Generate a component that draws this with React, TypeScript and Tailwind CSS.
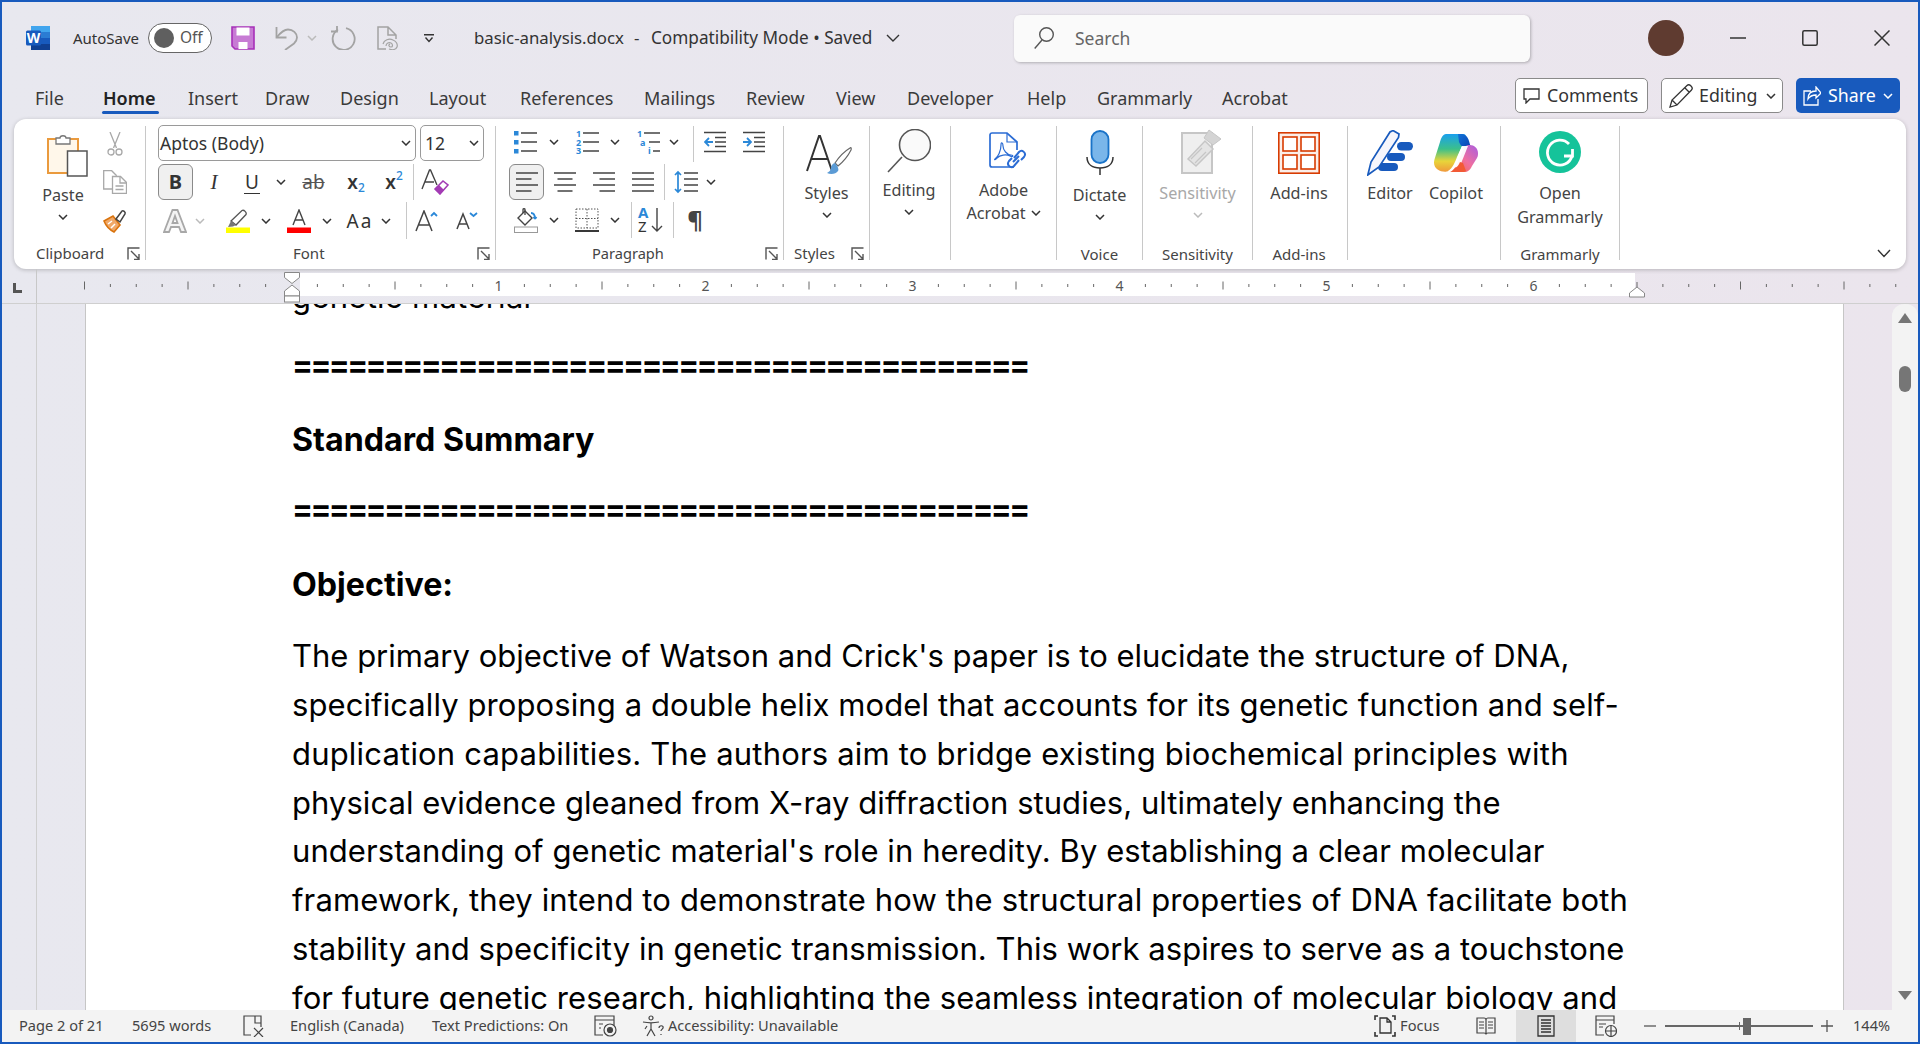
import React from "react";

const Chev = ({ c = "#333" }: { c?: string }) => (
  <svg width="10" height="6" viewBox="0 0 10 6"><path d="M1 1l4 4 4-4" fill="none" stroke={c} strokeWidth="1.5" /></svg>
);
const C = ({ w, children }: { w: string; children?: React.ReactNode }) => (
  <div className={`flex items-center justify-center shrink-0 ${w}`}>{children}</div>
);
const Launcher = () => (
  <svg width="13" height="13" viewBox="0 0 13 13" className="shrink-0"><path d="M1 12.5V1h11.5M4 4l8 8M12 7v5.5H7" fill="none" stroke="#555" strokeWidth="1.4" /></svg>
);
const Group = ({ w, label, labelCls, launcher, children }: { w: string; label?: string; labelCls?: string; launcher?: boolean; children?: React.ReactNode }) => (
  <div className={`flex flex-col shrink-0 h-[134px] border-r border-[#c8c8c8] ${w}`}>
    <div className="h-[122px]">{children}</div>
    <div className="h-[12px] flex items-center text-[15px] text-[#444]">
      {label && <span className={labelCls}>{label}</span>}
      {launcher && <span className="ml-auto mr-[5px] flex -mt-[2px]"><Launcher /></span>}
    </div>
  </div>
);

const WordLogo = () => (
  <svg width="24" height="24" viewBox="0 0 24 24">
    <rect x="5" y="0" width="19" height="6" fill="#41a5ee" />
    <rect x="5" y="6" width="19" height="6" fill="#2b7cd3" />
    <rect x="5" y="12" width="19" height="6" fill="#185abd" />
    <rect x="5" y="18" width="19" height="6" fill="#103f91" />
    <rect x="0" y="4.500" width="15" height="15" rx="1.5" fill="#185abd" />
    <text x="7.5" y="16.800" textAnchor="middle" fontSize="14" fontWeight="700" fill="#fff" fontFamily="Noto Sans">W</text>
  </svg>
);
const SaveIc = () => (
  <svg width="24" height="24" viewBox="0 0 24 24">
    <path d="M1 1h22v22H4l-3-3z" fill="#c77bd4" stroke="#a730b8" strokeWidth="1.6" />
    <rect x="5.5" y="1.5" width="13" height="8" fill="#fff" />
    <rect x="7.5" y="16" width="9" height="7" fill="#fff" />
  </svg>
);
const Undo = () => (
  <svg width="24" height="24" viewBox="0 0 24 24" fill="none" stroke="#a3a3a3" strokeWidth="1.8">
    <path d="M1.5 1v10.5h10" />
    <path d="M1.5 11.5C6 6 9 3.5 13 3.5c5 0 9 3.500 9 8 0 2.500-1 4-3 6L10 24" />
  </svg>
);
const Redo = () => (
  <svg width="25" height="24" viewBox="0 0 25 24" fill="none" stroke="#a3a3a3" strokeWidth="1.8">
    <path d="M7 3.500A11 11 0 1 0 15 2.200" />
    <path d="M6 0v5.500h-6" />
  </svg>
);
const FileIc = () => (
  <svg width="21" height="24" viewBox="0 0 21 24" fill="none" stroke="#a3a3a3" strokeWidth="1.5">
    <path d="M9 23H1V1h10l8 8v4M11 1v8h8" />
    <path d="M9 20c0-3 3-4 5-3s2 4 0 4-3-2-1-3M6 18c1-4 6-6 10-4 3 1 5 4 4 7s-5 3-8 2" strokeWidth="1.2" />
  </svg>
);
const Customize = () => (
  <svg width="10" height="9" viewBox="0 0 10 9" fill="none" stroke="#333" strokeWidth="1.4"><path d="M0 .8h10M1.500 3.500L5 7.500l3.500-4" /></svg>
);
const SearchIc = () => (
  <svg width="20" height="22" viewBox="0 0 20 22" fill="none" stroke="#555" strokeWidth="1.4"><circle cx="12.500" cy="7.500" r="6.800" /><path d="M8 13L.7 21.500" /></svg>
);
const Paste = () => (
  <svg width="41" height="45" viewBox="0 0 41 45">
    <rect x="1" y="7" width="30" height="34" fill="#fff7ea" stroke="#ea9a3d" strokeWidth="2" />
    <path d="M9 12V6h4c0-3 6-3 6 0h4v6z" fill="#fff" stroke="#777" strokeWidth="1.300" />
    <rect x="20.500" y="19" width="19.500" height="25" fill="#fff" stroke="#555" strokeWidth="1.500" />
  </svg>
);
const Scissors = () => (
  <svg width="16" height="24" viewBox="0 0 16 24" fill="none" stroke="#a8a8a8" strokeWidth="1.300"><path d="M3 0l6.500 16M13 0L6.500 16" /><circle cx="4" cy="20" r="3" /><circle cx="12" cy="20" r="3" /></svg>
);
const Copy = () => (
  <svg width="24" height="24" viewBox="0 0 24 24" fill="none" stroke="#a8a8a8" strokeWidth="1.300"><path d="M9 19H.7V.7h8l5 5" /><path d="M9.500 6.500h8l6 6v11h-14z" fill="#fff" /><path d="M17 6.500V13h6.500M12.500 16h8M12.500 19.500h8" /></svg>
);
const Painter = () => (
  <svg width="24" height="24" viewBox="0 0 24 24">
    <path d="M1 12l9-5 7 9-6 7c-4-2-8-6-10-11z" fill="#f0a868" stroke="#d9730d" strokeWidth="1.600" />
    <path d="M5 15l4-3M8 19l4-4" stroke="#fff" strokeWidth="1.500" />
    <path d="M13 10l6-8c1-1 4 1 3 3l-5 8z" fill="#fff" stroke="#444" strokeWidth="1.500" />
  </svg>
);
const AEraser = () => (
  <svg width="28" height="26" viewBox="0 0 28 26">
    <path d="M1 20L8.500 1h1L16 16M4 13h9" fill="none" stroke="#444" strokeWidth="1.400" />
    <path d="M14 20l8-8 5 4-8 9z" fill="#fff" stroke="#a33bb4" strokeWidth="1.600" />
    <path d="M14 20l4-4 5 5-4 4z" fill="#a33bb4" />
  </svg>
);
const AOutline = () => (
  <svg width="24" height="24" viewBox="0 0 24 24"><path d="M1 23L9.500 1h5L23 23h-5l-2-5H8l-2 5zM9.500 14h5L12 7z" fill="#f4f4f4" stroke="#a8a8a8" strokeWidth="1.800" /></svg>
);
const Highlight = () => (
  <svg width="24" height="24" viewBox="0 0 24 24">
    <path d="M5 12L16 1.500c2-1 5 2 4 4L10 16z" fill="#fff" stroke="#555" strokeWidth="1.300" />
    <path d="M5 12l5 4-3 1.500L2 18z" fill="#777" />
    <rect x="0" y="18.500" width="24" height="6" fill="#ffff00" />
  </svg>
);
const FontColor = () => (
  <svg width="24" height="24" viewBox="0 0 24 24">
    <path d="M6 16L12 1l6 15M8 11h8" fill="none" stroke="#444" strokeWidth="1.400" />
    <rect x="0" y="18.500" width="24" height="6" fill="#ff0000" />
  </svg>
);
const Grow = () => (
  <svg width="24" height="22" viewBox="0 0 24 22" fill="none"><path d="M1 21L9 1l8 20M4 15h10" stroke="#444" strokeWidth="1.500" /><path d="M16 6l3-3 3 3" stroke="#2b88d8" strokeWidth="1.800" /></svg>
);
const Shrink = () => (
  <svg width="22" height="18" viewBox="0 0 22 18" fill="none"><path d="M1 17L7 2l6 15M3.500 12h7" stroke="#444" strokeWidth="1.500" /><path d="M14 1l3.500 3L21 1" stroke="#2b88d8" strokeWidth="1.800" /></svg>
);

const L = ({ d }: { d: string }) => <path d={d} fill="none" stroke="#444" strokeWidth="1.400" />;
const Bullets = () => (
  <svg width="24" height="24" viewBox="0 0 24 24">
    <rect x="1" y="1" width="4.500" height="4.500" fill="#2b88d8" /><rect x="1" y="10" width="4.500" height="4.500" fill="#2b88d8" /><rect x="1" y="19" width="4.500" height="4.500" fill="#2b88d8" />
    <L d="M8 3h16M8 12h16M8 21h16" />
  </svg>
);
const Numbered = () => (
  <svg width="24" height="26" viewBox="0 0 24 26" fontFamily="Noto Sans" fontSize="9" fontWeight="700" fill="#2b88d8">
    <text x="1" y="8">1</text><text x="1" y="17">2</text><text x="1" y="25">3</text>
    <L d="M8 4h16M8 13h16M8 22h16" />
  </svg>
);
const Multi = () => (
  <svg width="24" height="26" viewBox="0 0 24 26" fontFamily="Noto Sans" fontSize="9" fontWeight="700" fill="#2b88d8">
    <text x="1" y="8">1</text><text x="4" y="17">a</text><text x="12" y="25">i</text>
    <L d="M8 4h16M13 13h11M17 22h7" />
  </svg>
);
const IndentL = () => (
  <svg width="22" height="22" viewBox="0 0 22 22"><L d="M0 1.500h22M0 20.500h22M11 6.500h11M11 11h11M11 15.500h11" /><path d="M9 11H1M5 7l-4 4 4 4" fill="none" stroke="#2b88d8" strokeWidth="1.800" /></svg>
);
const IndentR = () => (
  <svg width="22" height="22" viewBox="0 0 22 22"><L d="M0 1.500h22M0 20.500h22M11 6.500h11M11 11h11M11 15.500h11" /><path d="M0 11h8M4 7l4 4-4 4" fill="none" stroke="#2b88d8" strokeWidth="1.800" /></svg>
);
const Align = ({ d }: { d: string }) => <svg width="22" height="20" viewBox="0 0 22 20"><L d={d} /></svg>;
const LineSp = () => (
  <svg width="24" height="24" viewBox="0 0 24 24">
    <path d="M4 2v20M1 5l3-3 3 3M1 19l3 3 3-3" fill="none" stroke="#2b88d8" strokeWidth="1.700" />
    <L d="M10 3h14M10 9h14M10 15h14M10 21h14" />
  </svg>
);
const Shading = () => (
  <svg width="24" height="25" viewBox="0 0 24 25">
    <path d="M4 10L11 3l7 7-7 7z" fill="#fff" stroke="#444" strokeWidth="1.400" />
    <path d="M9 5V1.500c0-1 2-1 2 0V7" fill="none" stroke="#444" strokeWidth="1.300" />
    <path d="M17 5c3 0 4 3 4 6M21 11l-1.500-2M21 11l1.500-2" fill="none" stroke="#2b88d8" strokeWidth="1.800" />
    <rect x=".5" y="19" width="23" height="5.500" fill="#fff" stroke="#999" />
  </svg>
);
const Borders = () => (
  <svg width="24" height="24" viewBox="0 0 24 24">
    <path d="M1 1h22v19H1zM12 1v19M1 10.500h22" fill="none" stroke="#555" strokeWidth="1" strokeDasharray="1.500 1.500" />
    <path d="M0 23h24" stroke="#222" strokeWidth="1.800" />
  </svg>
);
const Sort = () => (
  <svg width="28" height="26" viewBox="0 0 28 26" fontFamily="Noto Sans" fontSize="15">
    <text x="1" y="11" fill="#2b88d8" fontWeight="700">A</text>
    <text x="1" y="25" fill="#333">Z</text>
    <path d="M20 1v23M15 19l5 5 5-5" fill="none" stroke="#444" strokeWidth="1.400" />
  </svg>
);
const StylesIc = () => (
  <svg width="46" height="42" viewBox="0 0 46 42">
    <path d="M1 36L13 1h1l12 35M5.500 24h17" fill="none" stroke="#333" strokeWidth="2" />
    <path d="M44 13c1-1 1.500 0 1 2-3 6-8 12-13 16l-3-3c4-6 10-12 15-15z" fill="#fff" stroke="#666" strokeWidth="1.200" />
    <path d="M29 28c-2 0-4 3-4 5 0 2-2 4-4 5 4 2 9 1 11-2 1-1 0-5-3-8z" fill="#5b9bd5" />
  </svg>
);
const Magnifier = () => (
  <svg width="44" height="44" viewBox="0 0 44 44"><circle cx="28" cy="16" r="15.500" fill="#fafafa" stroke="#555" strokeWidth="1.600" /><path d="M15 28L1 43" stroke="#555" strokeWidth="1.600" /></svg>
);
const Acrobat = () => (
  <svg width="38" height="42" viewBox="0 0 38 42" fill="none">
    <path d="M25 35H3a2 2 0 0 1-2-2V3a2 2 0 0 1 2-2h15l10 9v8" stroke="#2b6cd4" strokeWidth="1.700" />
    <path d="M18 1v9h10" stroke="#2b6cd4" strokeWidth="1.200" />
    <path d="M6 27c3-2 6-8 6-14 0-4 2-2 2 1 0 4 4 9 8 9 3 0 2 3-1 1-4-2-10-1-13 2-2 2-3 2-2 1z" stroke="#2b6cd4" strokeWidth="1.200" />
    <path d="M25 26l5-6c3-3 8 1 5 5l-3 3M30 28l-5 6c-3 3-8-1-5-5l3-3M24 30l6-6" stroke="#2b6cd4" strokeWidth="2" />
  </svg>
);
const Mic = () => (
  <svg width="28" height="45" viewBox="0 0 28 45" fill="none">
    <rect x="5.500" y="1" width="17" height="32" rx="8.500" fill="#7ab6ea" stroke="#1a73c8" strokeWidth="1.800" />
    <path d="M1 27c0 8 6 11 13 11s13-3 13-11M14 38v7" stroke="#333" strokeWidth="1.500" />
  </svg>
);
const SensIc = () => (
  <svg width="41" height="45" viewBox="0 0 41 45">
    <path d="M1 4h30v40H1z" fill="#efefef" stroke="#c6c6c6" strokeWidth="2" />
    <path d="M7 30L24 12l8 8-17 17z" fill="#e4e4e4" stroke="#c6c6c6" strokeWidth="1.500" />
    <path d="M10 30l11-11M14 34l11-11" stroke="#c6c6c6" strokeWidth="1.200" />
    <path d="M23 9l5-8 12 9-8 6z" fill="#d4d4d4" stroke="#c6c6c6" />
  </svg>
);
const AddIns = () => (
  <svg width="42" height="42" viewBox="0 0 42 42" fill="none" stroke="#d83b01" strokeWidth="1.600">
    <rect x=".8" y=".8" width="40.400" height="40.400" fill="#fbeee8" />
    <rect x="5" y="5" width="14" height="14" fill="#fff" /><rect x="23" y="5" width="14" height="14" fill="#fff" /><rect x="5" y="23" width="14" height="14" fill="#fff" /><rect x="23" y="23" width="14" height="14" fill="#fff" />
  </svg>
);
const EditorIc = () => (
  <svg width="46" height="46" viewBox="0 0 46 46">
    <rect x="30" y="12" width="16" height="8.500" rx="4.200" fill="#185abd" /><rect x="20" y="23" width="18" height="8" rx="4" fill="#185abd" /><rect x="11" y="33" width="20" height="8" rx="4" fill="#185abd" />
    <path d="M.8 45L4 32 23 2l3-1.500 6 3.500-.5 3.500L12 37z" fill="#f6f6fc" stroke="#185abd" strokeWidth="1.700" />
  </svg>
);
const Copilot = () => (
  <svg width="44" height="40" viewBox="0 0 44 40">
    <defs>
      <linearGradient id="cpa" x1="0" y1="0" x2="0" y2="1"><stop offset="0" stopColor="#19a0ee" /><stop offset=".4" stopColor="#3cc08a" /><stop offset=".72" stopColor="#e8d53a" /><stop offset="1" stopColor="#f09a3c" /></linearGradient>
      <linearGradient id="cpb" x1="1" y1="0" x2="0" y2="1"><stop offset="0" stopColor="#a95de0" /><stop offset=".5" stopColor="#ef6fa0" /><stop offset="1" stopColor="#f6693a" /></linearGradient>
      <linearGradient id="cpc" x1="0" y1="0" x2="1" y2="1"><stop offset="0" stopColor="#1173d8" /><stop offset="1" stopColor="#0b3fb0" /></linearGradient>
    </defs>
    <path d="M12 1h17c2 0 3 1 3 3L23 24c-2 5-4 11-9 14-1 .7-2 .7-3 .7-5 0-11-3-11-9 0-2 .5-3 1-5L6 9c1-4 3-8 6-8z" fill="url(#cpa)" />
    <path d="M24 1h4c3 0 6 3 7 7l2 7-8-1c-2-1-3-3-4-5z" fill="url(#cpc)" />
    <path d="M36 12c4 0 8 3 8 8 0 2 0 3-1 5l-5 8c-2 4-4 6-8 6H16c3-1 5-4 7-8l6-14c1-3 3-5 7-5z" fill="url(#cpb)" />
    <path d="M20 33l8-20h6l-8 20c-1 2-5 2-6 0z" fill="#fff" opacity=".95" />
    <path d="M20 36c3-2 5-4 6-7l3 1 3 8-2 1H17z" fill="#f25a35" />
  </svg>
);
const Grammarly = () => (
  <svg width="42" height="42" viewBox="0 0 42 42" fill="none">
    <circle cx="21" cy="21" r="21" fill="#15c39a" />
    <path d="M30 13A12.500 12.500 0 1 0 33 25" stroke="#fff" strokeWidth="2.800" />
    <path d="M25 25h8.500v-7" stroke="#fff" strokeWidth="2.800" />
  </svg>
);

const tabs: [string, string][] = [
  ["File", "w-[68px]"],
  ["Insert", "w-[77px]"],
  ["Draw", "w-[75px]"],
  ["Design", "w-[89px]"],
  ["Layout", "w-[91px]"],
  ["References", "w-[124px]"],
  ["Mailings", "w-[102px]"],
  ["Review", "w-[90px]"],
  ["View", "w-[71px]"],
  ["Developer", "w-[120px]"],
  ["Help", "w-[70px]"],
  ["Grammarly", "w-[125px]"],
  ["Acrobat", "w-[70px]"],
];
const Tab = ({ t }: { t: [string, string] }) => <span className={`shrink-0 ${t[1]}`}>{t[0]}</span>;

const lines: [string, string][] = [
  ["The primary objective of Watson and Crick's paper is to elucidate the structure of DNA,", "tracking-[0px]"],
  ["specifically proposing a double helix model that accounts for its genetic function and self-", "tracking-[0.09px]"],
  ["duplication capabilities. The authors aim to bridge existing biochemical principles with", "tracking-[0.19px]"],
  ["physical evidence gleaned from X-ray diffraction studies, ultimately enhancing the", "tracking-[0.045px]"],
  ["understanding of genetic material's role in heredity. By establishing a clear molecular", "tracking-[0.08px]"],
  ["framework, they intend to demonstrate how the structural properties of DNA facilitate both", "tracking-[0.135px]"],
  ["stability and specificity in genetic transmission. This work aspires to serve as a touchstone", "tracking-[0.05px]"],
  ["for future genetic research, highlighting the seamless integration of molecular biology and", "tracking-[0.08px]"],
];
const eq = "========================================";
const ticks = Array.from({ length: 72 }, (_, k) => k - 8);

const Ruler = () => (
  <svg width="1881" height="34" viewBox="37 269 1881 34" className="shrink-0">
    <rect x="300" y="273" width="1335" height="23" fill="#fff" />
    {ticks.map((i) => {
      const x = 291.5 + (207 * i) / 8;
      if (i % 8 === 0 && i > 0 && i <= 48)
        return <text key={i} x={x} y="291" textAnchor="middle" fontSize="14" fill="#555" fontFamily="Noto Sans">{i / 8}</text>;
      if (i === 0 || i === 52) return null;
      return i % 4 === 0 ? <path key={i} d={`M${x} 281.5v8`} stroke="#666" strokeWidth="1" /> : <path key={i} d={`M${x} 284v3`} stroke="#666" strokeWidth="1" />;
    })}
    <path d="M284.500 272.500h15v5l-7.500 6-7.500-6z" fill="#fff" stroke="#888" />
    <path d="M284.500 296v-5l7.500-6 7.500 6v5z" fill="#fff" stroke="#888" />
    <rect x="284.500" y="296" width="15" height="6" fill="#fff" stroke="#888" />
    <path d="M1629.500 297v-4l7.500-6 7.500 6v4z" fill="#fff" stroke="#888" />
    <path d="M1637 282v5" stroke="#666" />
  </svg>
);

export default function App() {
  return (
    <div className="w-[1920px] h-[1044px] overflow-hidden border-2 border-[#185abd] flex flex-col bg-gradient-to-r from-[#e8e8ef] to-[#ebe5ed] font-['Noto_Sans',sans-serif] text-[#333]">
      {/* Title bar */}
      <div className="h-[72px] shrink-0 flex items-center">
        <div className="ml-[24px] flex"><WordLogo /></div>
        <span className="ml-[23px] w-[66px] text-[15px] whitespace-nowrap">AutoSave</span>
        <div className="ml-[9px] w-[64px] h-[30px] rounded-full border-[1.5px] border-[#666] bg-white flex items-center pl-[5px]">
          <div className="w-[20px] h-[20px] rounded-full bg-[#5f5f5f]" />
          <span className="ml-[6px] text-[15.500px] text-[#555]">Off</span>
        </div>
        <div className="ml-[19px] flex"><SaveIc /></div>
        <div className="ml-[20px] flex"><Undo /></div>
        <div className="ml-[8px] flex"><Chev c="#bbb" /></div>
        <div className="ml-[14px] flex"><Redo /></div>
        <div className="ml-[21px] flex"><FileIc /></div>
        <div className="ml-[26px] flex"><Customize /></div>
        <span className="ml-[40px] w-[160px] text-[16.8px] whitespace-nowrap">basic-analysis.docx</span>
        <span className="w-[17px] text-[16.8px]">-</span>
        <span className="text-[17.2px] w-[226px] whitespace-nowrap">Compatibility Mode&nbsp;•&nbsp;Saved</span>
        <svg className="ml-[9px]" width="14" height="8" viewBox="0 0 14 8"><path d="M1 1l6 6 6-6" fill="none" stroke="#333" strokeWidth="1.400" /></svg>
        <div className="ml-[114px] w-[516px] h-[47px] rounded-[6px] bg-[#fafafa] shadow-[1px_1px_3px_rgba(0,0,0,0.25)] flex items-center pl-[20px]">
          <SearchIc />
          <span className="ml-[21px] text-[17.5px] text-[#666]">Search</span>
        </div>
        <div className="ml-[118px] w-[36px] h-[36px] rounded-full bg-[#5f3b30]" />
        <svg className="ml-[46px]" width="16" height="2" viewBox="0 0 16 2"><path d="M0 1h16" stroke="#333" strokeWidth="1.500" /></svg>
        <svg className="ml-[56px]" width="16" height="16" viewBox="0 0 16 16"><rect x=".8" y=".8" width="14.400" height="14.400" rx="1.500" fill="none" stroke="#333" strokeWidth="1.500" /></svg>
        <svg className="ml-[56px]" width="16" height="16" viewBox="0 0 16 16"><path d="M.5.5l15 15M15.500.5l-15 15" stroke="#333" strokeWidth="1.500" /></svg>
      </div>
      {/* Tabs */}
      <div className="h-[45px] shrink-0 flex items-start">
        <div className="ml-[33px] mt-[12px] flex text-[18px] leading-[24px] text-[#3a3a3a] whitespace-nowrap">
          <Tab t={tabs[0]} />
          <div className="w-[85px] shrink-0 relative font-semibold text-[#222]">
            Home
            <div className="absolute left-[-1px] w-[57px] top-[25px] h-[3px] rounded-[2px] bg-[#185abd]" />
          </div>
          {tabs.slice(1).map((t) => <Tab key={t[0]} t={t} />)}
        </div>
        <div className="ml-auto mt-[4px] mr-[18px] flex gap-[13px] text-[17.800px]">
          <div className="w-[133px] h-[35px] rounded-[5px] border border-[#8a8a8a] bg-white flex items-center pl-[7px]">
            <svg width="17" height="16" viewBox="0 0 17 16" fill="none"><path d="M1 1h15v10H7l-4 4v-4H1z" stroke="#333" strokeWidth="1.300" /></svg>
            <span className="ml-[7px]">Comments</span>
          </div>
          <div className="w-[122px] h-[35px] rounded-[5px] border border-[#8a8a8a] bg-white flex items-center pl-[7px]">
            <svg width="24" height="24" viewBox="0 0 24 24" fill="none"><path d="M1 23l2-7L18 1.500c1-1 2.500-1 4 .5s1.500 3 .5 4L8 21zM3 16l5 5M16 4l4 4" stroke="#333" strokeWidth="1.300" /></svg>
            <span className="ml-[6px]">Editing</span>
            <span className="ml-[9px] flex"><Chev /></span>
          </div>
          <div className="w-[104px] h-[35px] rounded-[5px] bg-[#185abd] text-white flex items-center pl-[7px]">
            <svg width="18" height="20" viewBox="0 0 18 20" fill="none"><path d="M8 5H1v14h14v-6M5 13c0-5 3-8 8-8V1l5 6-5 5V9c-4 0-6 1-8 4z" stroke="#fff" strokeWidth="1.300" /></svg>
            <span className="ml-[7px]">Share</span>
            <span className="ml-[7px] flex"><Chev c="#fff" /></span>
          </div>
        </div>
      </div>
      {/* Ribbon */}
      <div className="ml-[12px] w-[1892px] h-[150px] shrink-0 rounded-[12px] bg-white shadow-[0_1px_4px_rgba(0,0,0,0.22)] flex pt-[7px] text-[16.200px] leading-[20px] text-[#444]">
        <Group w="w-[132px]" label="Clipboard" labelCls="ml-[22px] -mt-[2px]" launcher>
          <div className="flex">
            <div className="ml-[9px] w-[80px] pt-[6px] flex flex-col items-center">
              <div className="ml-[8px] flex"><Paste /></div>
              <span className="mt-[8px]">Paste</span>
              <span className="mt-[9px] flex"><Chev /></span>
            </div>
            <div className="w-[24px] pt-[6px] flex flex-col items-center">
              <Scissors />
              <div className="mt-[14px]"><Copy /></div>
              <div className="mt-[15px]"><Painter /></div>
            </div>
          </div>
        </Group>
        <Group w="w-[350px]" label="Font" labelCls="ml-[147px] -mt-[2px]" launcher>
          <div className="pl-[12px] -mt-[1px] flex flex-col">
            <div className="flex gap-[4px] h-[36px] text-[#333] text-[17.5px]">
              <div className="w-[258px] rounded-[5px] border border-[#9a9a9a] flex items-center justify-between pl-[1px] pr-[4px]">
                <span>Aptos (Body)</span><Chev />
              </div>
              <div className="w-[64px] rounded-[5px] border border-[#9a9a9a] flex items-center justify-between pl-[4px] pr-[4px]">
                <span>12</span><Chev />
              </div>
            </div>
            <div className="mt-[3px] h-[36px] flex text-[#333]">
              <C w="w-[35px] rounded-[6px] border border-[#8a8a8a] bg-[#f0f0f0] font-bold text-[20px]">B</C>
              <C w="w-[42px] italic text-[21px] font-['Liberation_Serif',serif]">I</C>
              <C w="w-[34px] text-[19px]"><span className="border-b-[1.5px] border-[#333] leading-[22px] px-[1px]">U</span></C>
              <C w="w-[24px]"><Chev /></C>
              <C w="w-[41px] text-[19px] text-[#555]"><span className="line-through decoration-1">ab</span></C>
              <C w="w-[44px] text-[19px] font-semibold"><span>x</span><span className="text-[12px] text-[#2b88d8] font-medium mt-[12px]">2</span></C>
              <C w="w-[32px] text-[19px] font-semibold"><span>x</span><span className="text-[12px] text-[#2b88d8] font-medium -mt-[12px]">2</span></C>
              <div className="ml-[3px] w-px bg-[#c8c8c8]" />
              <C w="w-[42px]"><AEraser /></C>
            </div>
            <div className="mt-[2px] h-[37px] flex text-[#333]">
              <C w="w-[34px]"><AOutline /></C>
              <C w="w-[16px]"><Chev c="#bbb" /></C>
              <C w="ml-[12px] w-[36px]"><Highlight /></C>
              <C w="w-[20px]"><Chev /></C>
              <C w="w-[46px]"><FontColor /></C>
              <C w="w-[10px]"><Chev /></C>
              <C w="ml-[13px] w-[30px] text-[19px] tracking-[2px]">Aa</C>
              <C w="w-[22px]"><Chev /></C>
              <div className="ml-[9px] w-px bg-[#c8c8c8]" />
              <C w="w-[39px]"><Grow /></C>
              <C w="w-[42px]"><Shrink /></C>
            </div>
          </div>
        </Group>
        <Group w="w-[288px]" label="Paragraph" labelCls="ml-[96px] -mt-[2px] text-[14.600px]" launcher>
          <div className="flex flex-col">
            <div className="h-[32px] flex">
              <C w="ml-[17px] w-[24px]"><Bullets /></C>
              <C w="w-[34px]"><Chev /></C>
              <C w="ml-[4px] w-[24px]"><Numbered /></C>
              <C w="w-[32px]"><Chev /></C>
              <C w="ml-[5px] w-[24px]"><Multi /></C>
              <C w="w-[27px]"><Chev /></C>
              <div className="ml-[6px] w-px h-[36px] bg-[#c8c8c8]" />
              <C w="ml-[10px] w-[22px]"><IndentL /></C>
              <C w="ml-[17px] w-[22px]"><IndentR /></C>
            </div>
            <div className="mt-[6px] h-[36px] flex">
              <C w="ml-[13px] w-[35px] rounded-[6px] border border-[#8a8a8a] bg-[#f0f0f0]"><Align d="M0 1h22M0 7h15.500M0 13h22M0 19h15.500" /></C>
              <C w="w-[42px]"><Align d="M0 1h22M3.500 7h15M0 13h22M3.500 19h15" /></C>
              <C w="w-[36px]"><Align d="M0 1h22M6.500 7h15.500M0 13h22M6.500 19h15.500" /></C>
              <C w="w-[42px]"><Align d="M0 1h22M0 7h22M0 13h22M0 19h22" /></C>
              <div className="w-px bg-[#c8c8c8]" />
              <C w="ml-[9px] w-[24px]"><LineSp /></C>
              <C w="w-[26px]"><Chev /></C>
            </div>
            <div className="mt-[2px] h-[36px] flex">
              <C w="ml-[18px] w-[24px]"><Shading /></C>
              <C w="w-[32px]"><Chev /></C>
              <C w="ml-[5px] w-[24px]"><Borders /></C>
              <C w="w-[32px]"><Chev /></C>
              <div className="w-px bg-[#c8c8c8]" />
              <C w="ml-[5px] w-[28px]"><Sort /></C>
              <div className="ml-[8px] w-px bg-[#c8c8c8]" />
              <C w="w-[42px] text-[24px] font-bold text-[#444]">¶</C>
            </div>
          </div>
        </Group>
        <Group w="w-[86px]" label="Styles" labelCls="ml-[10px] -mt-[2px]" launcher>
          <div className="pt-[9px] flex flex-col items-center">
            <div className="ml-[4px] flex"><StylesIc /></div>
            <span className="mt-[6px]">Styles</span>
            <span className="mt-[9px] flex"><Chev /></span>
          </div>
        </Group>
        <Group w="w-[81px]">
          <div className="pt-[3px] pr-[2px] flex flex-col items-center">
            <Magnifier />
            <span className="mt-[7px]">Editing</span>
            <span className="mt-[9px] flex"><Chev /></span>
          </div>
        </Group>
        <Group w="w-[106px]">
          <div className="pt-[6px] flex flex-col items-center">
            <div className="ml-[8px] flex"><Acrobat /></div>
            <span className="mt-[6px]">Adobe</span>
            <span className="mt-[3px] flex items-center gap-[5px]">Acrobat<Chev /></span>
          </div>
        </Group>
        <Group w="w-[86px]" label="Voice" labelCls="w-full text-center">
          <div className="pt-[4px] flex flex-col items-center">
            <Mic />
            <span className="mt-[10px]">Dictate</span>
            <span className="mt-[9px] flex"><Chev /></span>
          </div>
        </Group>
        <Group w="w-[110px]" label="Sensitivity" labelCls="w-full text-center">
          <div className="pt-[3px] flex flex-col items-center text-[#a8a8a8]">
            <div className="ml-[7px] flex"><SensIc /></div>
            <span className="mt-[9px]">Sensitivity</span>
            <span className="mt-[9px] flex"><Chev c="#bbb" /></span>
          </div>
        </Group>
        <Group w="w-[95px]" label="Add-ins" labelCls="w-full text-center pr-[2px]">
          <div className="pt-[6px] pr-[2px] flex flex-col items-center">
            <AddIns />
            <span className="mt-[9px]">Add-ins</span>
          </div>
        </Group>
        <Group w="w-[153px]">
          <div className="flex">
            <div className="ml-[19px] w-[46px] pt-[4px] flex flex-col items-center">
              <EditorIc />
              <span className="mt-[7px]">Editor</span>
            </div>
            <div className="ml-[21px] w-[44px] pt-[7px] flex flex-col items-center">
              <Copilot />
              <span className="mt-[10px]">Copilot</span>
            </div>
          </div>
        </Group>
        <Group w="w-[119px]" label="Grammarly" labelCls="w-full text-center">
          <div className="pt-[5px] flex flex-col items-center">
            <Grammarly />
            <span className="mt-[10px]">Open</span>
            <span className="mt-[4px]">Grammarly</span>
          </div>
        </Group>
        <div className="ml-auto mr-[15px] mt-[123px]">
          <svg width="14" height="9" viewBox="0 0 14 9"><path d="M1 1l6 6.500L13 1" fill="none" stroke="#333" strokeWidth="1.400" /></svg>
        </div>
      </div>
      {/* Ruler */}
      <div className="h-[34px] shrink-0 flex">
        <div className="w-[35px] border-r border-[#c8c8c8] shrink-0 pl-[11px] pt-[14px]">
          <svg width="9" height="10" viewBox="0 0 9 10"><path d="M1.500 0v8.500H9" fill="none" stroke="#555" strokeWidth="3" /></svg>
        </div>
        <Ruler />
      </div>
      {/* Document */}
      <div className="flex-1 min-h-0 flex border-t border-[#cfcfcf]">
        <div className="w-[35px] shrink-0 border-r border-[#cfcfcf]" />
        <div className="w-[48px] shrink-0" />
        <div className="w-[1759px] shrink-0 bg-white border-x border-[#c6c6c6] overflow-hidden pl-[206px] font-['Inter',sans-serif] text-[31px] leading-[48.8px] text-black whitespace-nowrap">
          <div className="-mt-[31px] tracking-[0.3px]">genetic material</div>
          <div className="mt-[19.1px] font-bold tracking-[-2.65px]">{eq}</div>
          <div className="mt-[26.5px] font-bold text-[32.2px]">Standard Summary</div>
          <div className="mt-[20.3px] font-bold tracking-[-2.65px]">{eq}</div>
          <div className="mt-[26.5px] font-bold text-[32.2px]">Objective:</div>
          <div className="mt-[22.8px]">
            {lines.map((l) => <div key={l[0]} className={l[1]}>{l[0]}</div>)}
          </div>
        </div>
        <div className="w-[48px] shrink-0" />
        <div className="w-[26px] shrink-0 bg-[#f3f3f3] rounded-t-[12px] flex flex-col items-center">
          <svg className="mt-[9px]" width="14" height="10" viewBox="0 0 14 10"><path d="M7 0l7 10H0z" fill="#757575" /></svg>
          <div className="mt-[43px] w-[12px] h-[26px] rounded-full bg-[#767676]" />
          <svg className="mt-auto mb-[10px]" width="14" height="9" viewBox="0 0 14 9"><path d="M7 9L0 0h14z" fill="#757575" /></svg>
        </div>
      </div>
      {/* Status */}
      <div className="h-[32px] shrink-0 bg-[#f3f3f3] flex items-center text-[14.600px] text-[#444] whitespace-nowrap">
        <span className="ml-[17px] w-[113px]">Page 2 of 21</span>
        <span className="w-[111px]">5695 words</span>
        <svg width="22" height="22" viewBox="0 0 22 22" fill="none" stroke="#444" strokeWidth="1.200"><path d="M8 20H1V1h17v11M12 1v7h6M11 13l9 9M20 13l-9 9" /></svg>
        <span className="ml-[25px] w-[142px]">English (Canada)</span>
        <span className="w-[162px]">Text Predictions: On</span>
        <svg width="23" height="22" viewBox="0 0 23 22" fill="none" stroke="#444" strokeWidth="1.200"><path d="M9 20H1V1h19v9M1 5h19M5 9h4M5 13h2" /><circle cx="16" cy="15" r="6" /><circle cx="16" cy="15" r="2.500" fill="#444" /></svg>
        <svg className="ml-[25px]" width="22" height="22" viewBox="0 0 22 22" fill="none" stroke="#444" strokeWidth="1.200"><circle cx="9" cy="3" r="2" /><path d="M1 7c5 1 11 1 16 0M9 8v6M5 21l4-7 4 7M3 14l2-3M17 13c0-3 5-3 4 0-.5 1.500-2 1.500-2 3M19 19v1" /></svg>
        <span className="ml-[4px]">Accessibility: Unavailable</span>
        <svg className="ml-auto" width="22" height="22" viewBox="0 0 22 22" fill="none" stroke="#333" strokeWidth="1.300"><path d="M1 5V1h3M18 1h3v4M1 17v4h3M18 21h3v-4" strokeWidth="1.600" /><path d="M6 18V3h7l4 4v11zM13 3v4h4" /></svg>
        <span className="ml-[4px] w-[76px]">Focus</span>
        <svg width="20" height="18" viewBox="0 0 20 18" fill="none" stroke="#444" strokeWidth="1.200"><path d="M1 1h7c1 0 2 1 2 2 0-1 1-2 2-2h7v15h-7c-1 0-2 .5-2 1.500 0-1-1-1.500-2-1.500H1zM10 3v14M3 5h5M3 8h5M3 11h5M12 5h5M12 8h5M12 11h5" /></svg>
        <div className="ml-[20px] w-[60px] h-[32px] bg-[#dedede] flex items-center justify-center">
          <svg width="18" height="22" viewBox="0 0 18 22" fill="none" stroke="#333" strokeWidth="1.300"><path d="M1 1h16v20H1zM4 5h10M4 8h10M4 11h10M4 14h10M4 17h10" /></svg>
        </div>
        <svg className="ml-[19px]" width="22" height="22" viewBox="0 0 22 22" fill="none" stroke="#444" strokeWidth="1.200"><path d="M9 20H1V1h18v8M1 5h18M4 9h7M4 12h4" /><circle cx="16" cy="16" r="5.500" /><path d="M10.500 16h11M16 10.500v11" /></svg>
        <svg className="ml-[27px]" width="12" height="2" viewBox="0 0 12 2"><path d="M0 1h12" stroke="#555" strokeWidth="1.300" /></svg>
        <div className="ml-[9px] w-[148px] h-[2px] bg-[#666] flex items-center relative">
          <div className="ml-[74px] w-px h-[8px] bg-[#666]" />
          <div className="ml-[3px] w-[8px] h-[17px] bg-[#666]" />
        </div>
        <svg className="ml-[8px]" width="12" height="12" viewBox="0 0 12 12"><path d="M0 6h12M6 0v12" stroke="#555" strokeWidth="1.300" /></svg>
        <span className="ml-[20px] mr-[28px] text-[14.500px]">144%</span>
      </div>
    </div>
  );
}
